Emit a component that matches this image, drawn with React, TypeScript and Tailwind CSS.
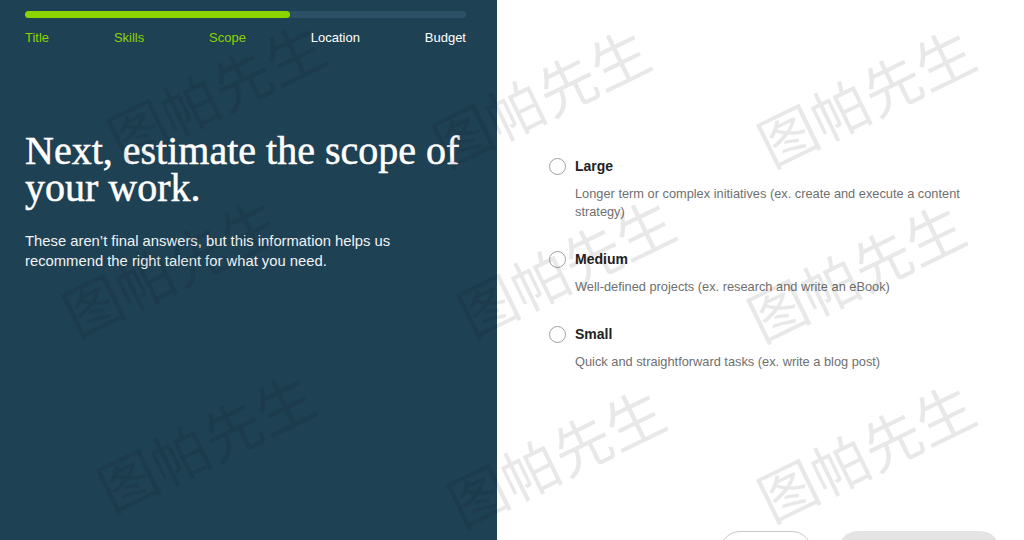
const steps = [
  { label: 'Title', done: true },
  { label: 'Skills', done: true },
  { label: 'Scope', done: true },
  { label: 'Location', done: false },
  { label: 'Budget', done: false },
]

const options = [
  {
    title: 'Large',
    text: 'Longer term or complex initiatives (ex. create and execute a content strategy)',
  },
  { title: 'Medium', text: 'Well-defined projects (ex. research and write an eBook)' },
  { title: 'Small', text: 'Quick and straightforward tasks (ex. write a blog post)' },
]

const marks = [
  [215, 90], [540, 95], [865, 95],
  [170, 265], [565, 265], [855, 270],
  [205, 440], [555, 455], [865, 450],
]

function Watermarks() {
  return (
    <div className="pointer-events-none absolute inset-0 overflow-hidden">
      {marks.map(([x, y], i) => (
        <div
          key={i}
          className="absolute -translate-x-1/2 -translate-y-1/2 -rotate-[26deg] whitespace-nowrap text-[58px] leading-none text-black/[0.09] [font-family:'Noto_Sans_CJK_SC',sans-serif]"
          style={{ left: x, top: y }}
        >
          图帕先生
        </div>
      ))}
    </div>
  )
}

export default function App() {
  return (
    <div className="relative flex h-[540px] w-[1024px] overflow-hidden bg-white [font-family:'Liberation_Sans',Arial,sans-serif]">
      <div className="flex w-[497px] shrink-0 flex-col bg-[#1f4154] px-[25px] pt-[11px]">
        <div className="h-[7px] w-[441px] rounded-full bg-[#2c5167]">
          <div className="h-full w-[265px] rounded-full bg-[#8cd400]" />
        </div>
        <div className="mt-[10px] flex w-[441px] justify-between text-[13px]">
          {steps.map((s) => (
            <span key={s.label} className={s.done ? 'text-[#8cd400]' : 'text-white'}>
              {s.label}
            </span>
          ))}
        </div>
        <h1 className="mt-[84px] text-[40px] leading-[37px] text-white [-webkit-text-stroke:0.5px_white] [font-family:'Liberation_Serif',serif]">
          Next, estimate the scope of your work.
        </h1>
        <p className="mt-[25px] w-[400px] text-[14.8px] leading-[20px] text-[#f2f4f5]">
          These aren’t final answers, but this information helps us recommend the right talent for what you need.
        </p>
      </div>
      <div className="flex flex-1 flex-col pl-[52px] pr-[24px] pt-[157px]">
        <div className="flex h-[374px] shrink-0 flex-col gap-[29px]">
          {options.map((o) => (
            <div key={o.title} className="flex flex-col">
              <label className="flex items-center gap-[9px]">
                <span className="h-[17px] w-[17px] rounded-full border border-[#9aa0a6] bg-white" />
                <span className="text-[14px] font-bold leading-[18px] text-[#222]">{o.title}</span>
              </label>
              <p className="mt-[10px] w-[428px] pl-[26px] text-[12.8px] leading-[18px] text-[#6f6f6f]">
                {o.text}
              </p>
            </div>
          ))}
        </div>
        <div className="flex shrink-0 justify-end gap-[26px]">
          <button className="h-10 w-[92px] rounded-full border border-[#c8c8c8] bg-white" />
          <button className="h-10 w-[162px] rounded-full bg-[#e4e4e4]" />
        </div>
      </div>
      <Watermarks />
    </div>
  )
}
